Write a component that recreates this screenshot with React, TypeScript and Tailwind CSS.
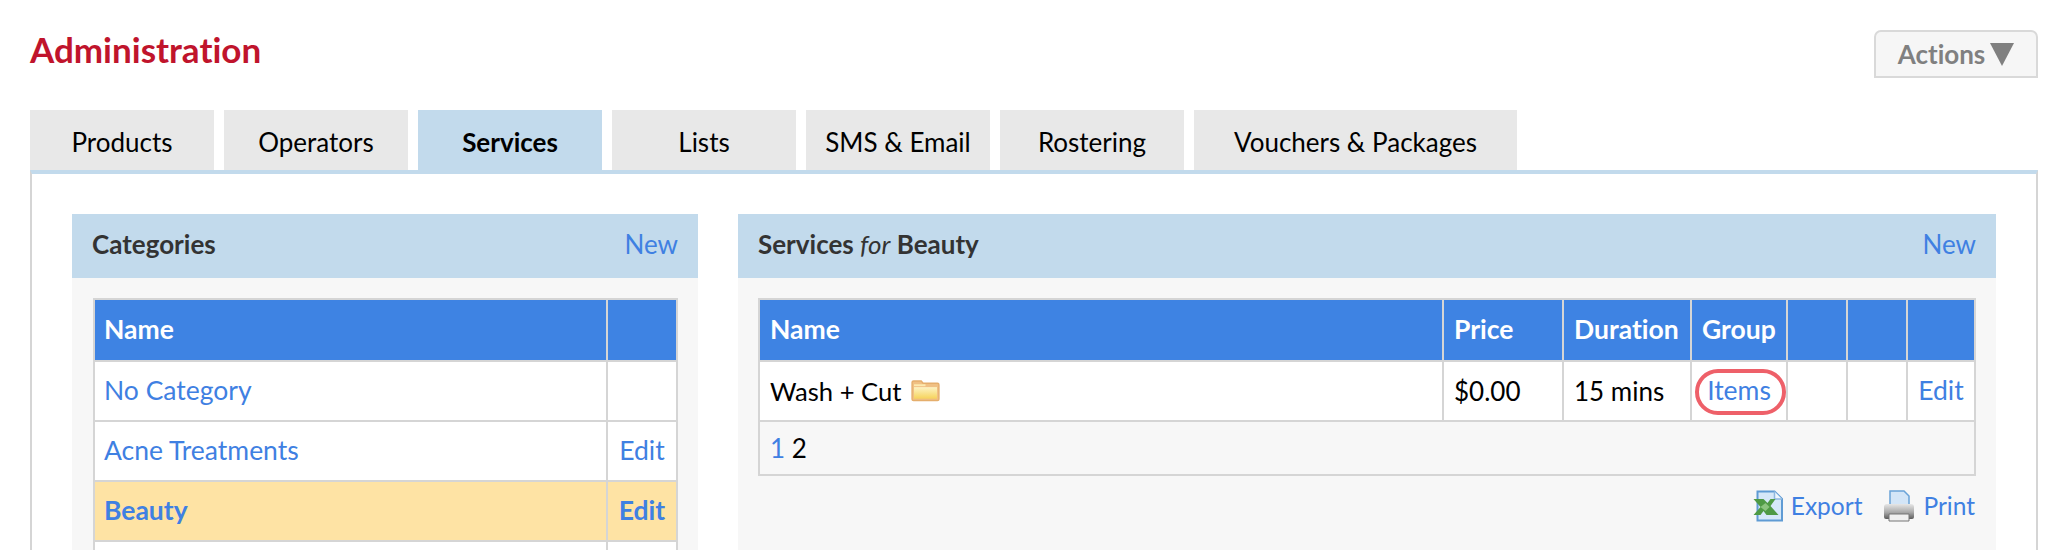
import React from 'react';

const tabs = ['Products', 'Operators', 'Services', 'Lists', 'SMS & Email', 'Rostering', 'Vouchers & Packages'];

function FolderIcon() {
  return (
    <svg width="29" height="23" viewBox="0 0 30 24" className="ml-[10px]">
      <defs>
        <linearGradient id="folderFill" x1="0" y1="0" x2="0" y2="1">
          <stop offset="0" stopColor="#fdf3c4" />
          <stop offset="1" stopColor="#f6d35c" />
        </linearGradient>
      </defs>
      <path d="M1 3.500A1.500 1.500 0 0 1 2.500 2h8l2 2.500h15A1.500 1.500 0 0 1 29 6v15a1.500 1.500 0 0 1-1.500 1.500h-25A1.500 1.500 0 0 1 1 21z" fill="#f0c084" stroke="#e5ae6c" strokeWidth="1.500" />
      <path d="M3 8.500h24V20.500H3z" fill="url(#folderFill)" />
      <path d="M3 6.500h12" stroke="#fdeab0" strokeWidth="2" />
    </svg>
  );
}

function ExcelIcon() {
  return (
    <svg width="31" height="32" viewBox="0 0 30 32" className="mr-[7px]">
      <path d="M4 1.500h17l7.500 7.500v21.500H4z" fill="#d6e8f8" stroke="#5f9bd4" strokeWidth="2" />
      <path d="M21 1.500v7.500h7.500" fill="#eef6fd" stroke="#8db8e0" strokeWidth="1.500" />
      <path d="M0 9h10l4 4 3-4h5l-5 7 8 9H13l-3-4-3 4H0l7-8z" fill="#4f9a44" />
      <path d="M7 17l5 4 4-4-4-4z" fill="#8cc47e" />
    </svg>
  );
}

function PrinterIcon() {
  return (
    <svg width="32" height="32" viewBox="0 0 32 32" className="mr-[8px]">
      <defs>
        <linearGradient id="printerBody" x1="0" y1="0" x2="0" y2="1">
          <stop offset="0" stopColor="#e6e6e6" />
          <stop offset="0.55" stopColor="#a9a9a9" />
          <stop offset="1" stopColor="#5c5c5c" />
        </linearGradient>
      </defs>
      <path d="M7 1h14l5 5v10H7z" fill="#d3e5f7" stroke="#6aa3d8" strokeWidth="1.500" />
      <path d="M1 17a3 3 0 0 1 3-3h24a3 3 0 0 1 3 3v10a2 2 0 0 1-2 2H3a2 2 0 0 1-2-2z" fill="url(#printerBody)" />
      <path d="M6 24h20v7H6z" fill="#f0f0f0" stroke="#777" strokeWidth="1" />
    </svg>
  );
}

export default function App() {
  return (
    <div className="h-[550px] overflow-hidden bg-white font-['Lato',sans-serif] text-[26px] text-black [font-variant-ligatures:none]">
      {/* Title row */}
      <div className="flex h-[110px] items-start justify-between pl-[30px] pr-[30px]">
        <h1 className="mt-[28px] text-[35px] leading-[42px] font-bold text-[#c0142c]">Administration</h1>
        <button className="mt-[30px] flex h-[48px] w-[164px] items-center justify-center gap-[5px] rounded-t-[7px] border-2 border-[#d9d9d9] bg-[#f6f6f6] text-[26px] font-bold text-[#808080]">
          Actions
          <svg width="24" height="23" viewBox="0 0 24 23">
            <path d="M0 0h24L12 23z" fill="#808080" />
          </svg>
        </button>
      </div>

      {/* Tabs */}
      <div className="ml-[30px] flex h-[60px] gap-[10px]">
        {tabs.map(tab => (
          <div
            key={tab}
            className={`flex h-[60px] items-center justify-center pt-[5px] ${tab === 'Vouchers & Packages' ? 'w-[323px]' : 'w-[184px]'} ${tab === 'Services' ? 'bg-[#c2daec] font-bold' : 'bg-[#e8e8e8]'}`}
          >
            {tab}
          </div>
        ))}
      </div>

      {/* Content */}
      <div className="mx-[30px] flex h-[400px] gap-[40px] border-x-2 border-t-4 border-x-[#d5d5d5] border-t-[#c2daec] px-[40px] pt-[40px]">
        {/* Categories */}
        <div className="w-[626px] shrink-0 bg-[#f7f7f7]">
          <div className="flex h-[64px] items-center justify-between bg-[#c2daec] pb-[4px] pl-[20px] pr-[20px]">
            <span className="font-bold text-[#333333]">Categories</span>
            <a className="text-[#3f80e2]">New</a>
          </div>
          <table className="ml-[21px] mt-[20px] w-[585px] table-fixed border-collapse border-2 border-[#d5d5d5] text-[26.5px]">
            <colgroup>
              <col className="w-[513px]" />
              <col />
            </colgroup>
            <thead>
              <tr className="h-[62px] bg-[#3e83e3] text-left font-bold text-white">
                <th className="border-2 border-[#d5d5d5] px-[9px]">Name</th>
                <th className="border-2 border-[#d5d5d5]"></th>
              </tr>
            </thead>
            <tbody className="text-[#3f80e2]">
              <tr className="h-[60px] bg-white">
                <td className="border-2 border-[#d5d5d5] px-[9px]">No Category</td>
                <td className="border-2 border-[#d5d5d5]"></td>
              </tr>
              <tr className="h-[60px] bg-white">
                <td className="border-2 border-[#d5d5d5] px-[9px]">Acne Treatments</td>
                <td className="border-2 border-[#d5d5d5] text-center">Edit</td>
              </tr>
              <tr className="h-[60px] bg-[#fee3a4] font-bold">
                <td className="border-2 border-[#d5d5d5] px-[9px]">Beauty</td>
                <td className="border-2 border-[#d5d5d5] text-center">Edit</td>
              </tr>
              <tr className="h-[60px] bg-white">
                <td className="border-2 border-[#d5d5d5] px-[9px]"></td>
                <td className="border-2 border-[#d5d5d5]"></td>
              </tr>
            </tbody>
          </table>
        </div>

        {/* Services */}
        <div className="w-[1258px] shrink-0 bg-[#f7f7f7]">
          <div className="flex h-[64px] items-center justify-between bg-[#c2daec] pb-[4px] pl-[20px] pr-[20px]">
            <span className="font-bold text-[#333333]">
              Services <i className="font-normal">for</i> Beauty
            </span>
            <a className="text-[#3f80e2]">New</a>
          </div>
          <div className="ml-[20px] mt-[20px] w-[1218px]">
            <table className="w-full table-fixed border-collapse border-2 border-[#d5d5d5]">
              <colgroup>
                <col className="w-[684px]" />
                <col className="w-[120px]" />
                <col className="w-[128px]" />
                <col className="w-[96px]" />
                <col className="w-[60px]" />
                <col className="w-[60px]" />
                <col />
              </colgroup>
              <thead>
                <tr className="h-[62px] bg-[#3e83e3] text-left text-[26.5px] font-bold text-white">
                  <th className="border-2 border-[#d5d5d5] px-[10px]">Name</th>
                  <th className="border-2 border-[#d5d5d5] px-[10px]">Price</th>
                  <th className="border-2 border-[#d5d5d5] px-[10px]">Duration</th>
                  <th className="border-2 border-[#d5d5d5] px-[10px]">Group</th>
                  <th className="border-2 border-[#d5d5d5]"></th>
                  <th className="border-2 border-[#d5d5d5]"></th>
                  <th className="border-2 border-[#d5d5d5]"></th>
                </tr>
              </thead>
              <tbody>
                <tr className="h-[60px] bg-white">
                  <td className="border-2 border-[#d5d5d5] px-[10px]">
                    <span className="flex items-center text-[25.6px]">
                      Wash + Cut
                      <FolderIcon />
                    </span>
                  </td>
                  <td className="border-2 border-[#d5d5d5] px-[10px]">$0.00</td>
                  <td className="border-2 border-[#d5d5d5] px-[10px]">15 mins</td>
                  <td className="relative border-2 border-[#d5d5d5] text-center text-[26.5px] text-[#3f80e2]">
                    Items
                    <span className="absolute left-[3px] top-[7px] h-[46px] w-[91px] rounded-[23px] border-4 border-[#ee6069]"></span>
                  </td>
                  <td className="border-2 border-[#d5d5d5]"></td>
                  <td className="border-2 border-[#d5d5d5]"></td>
                  <td className="border-2 border-[#d5d5d5] text-center text-[26.5px] text-[#3f80e2]">Edit</td>
                </tr>
                <tr className="h-[54px]">
                  <td colSpan={7} className="border-2 border-[#d5d5d5] px-[10px]">
                    <a className="text-[#3f80e2]">1</a> 2
                  </td>
                </tr>
              </tbody>
            </table>
            <div className="mt-[12px] flex items-center justify-end pr-[1px] text-[24.5px] text-[#3f80e2]">
              <ExcelIcon />
              <a className="mr-[21px]">Export</a>
              <PrinterIcon />
              <a>Print</a>
            </div>
          </div>
        </div>
      </div>
    </div>
  );
}
